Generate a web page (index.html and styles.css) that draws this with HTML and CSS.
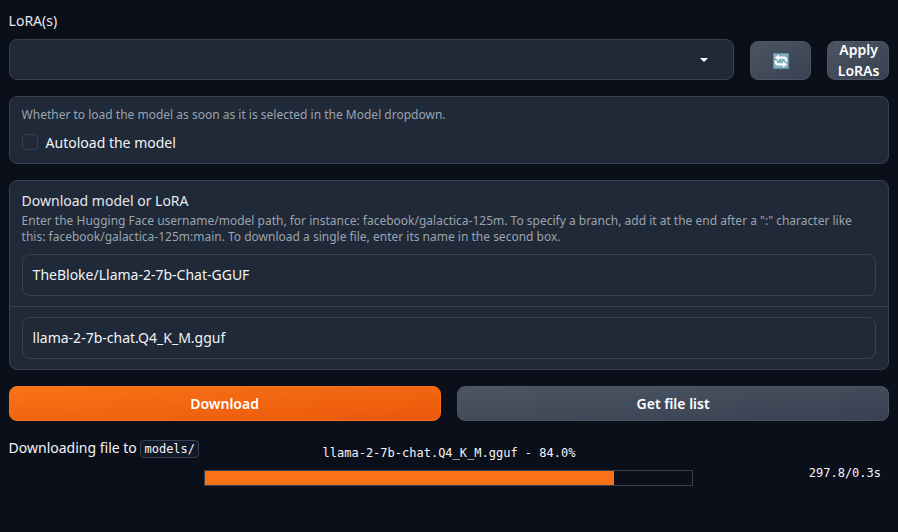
FILE: index.html
```html
<!DOCTYPE html>
<html lang="en">
<head>
<meta charset="utf-8">
<title>Model</title>
<link rel="stylesheet" href="styles.css">
</head>
<body>
<main class="page">
  <div class="label">LoRA(s)</div>
  <div class="lora-row">
    <div class="select">
      <svg class="caret" width="18" height="18" viewBox="0 0 18 18"><path d="M5 7l4 4 4-4z" fill="#fff"/></svg>
    </div>
    <button class="btn secondary small refresh" aria-label="Refresh">
      <svg width="16" height="16" viewBox="0 0 16 16">
        <rect x=".25" y=".25" width="15.5" height="15.5" rx=".8" fill="#82aebf" stroke="#568b9e" stroke-width=".7"/>
        <path d="M13.300 8.600V7.200Q13.300 4.600 10.700 4.600H5M2.700 7.400v1.400Q2.700 11.400 5.300 11.400H11" fill="none" stroke="#fff" stroke-width="2.100"/>
        <path d="M6 1.500v6.200L1.800 4.600zM10 8.300v6.200l4.200-3.100z" fill="#fff"/>
      </svg>
    </button>
    <button class="btn secondary small apply">Apply LoRAs</button>
  </div>
  <section class="card autoload">
    <div class="info">Whether to load the model as soon as it is selected in the Model dropdown.</div>
    <label class="check"><span class="box"></span><span>Autoload the model</span></label>
  </section>
  <section class="card">
    <div class="field first">
      <div class="title">Download model or LoRA</div>
      <div class="info">Enter the Hugging Face username/model path, for instance: facebook/galactica-125m. To specify a branch, add it at the end after a ":" character like this: facebook/galactica-125m:main. To download a single file, enter its name in the second box.</div>
      <div class="input">TheBloke/Llama-2-7b-Chat-GGUF</div>
    </div>
    <div class="field second">
      <div class="input">llama-2-7b-chat.Q4_K_M.gguf</div>
    </div>
  </section>
  <div class="actions">
    <button class="btn primary">Download</button>
    <button class="btn secondary">Get file list</button>
  </div>
  <div class="status">
    <div class="message">Downloading file to <code>models/</code></div>
    <div class="progress">
      <div class="progress-text">llama-2-7b-chat.Q4_K_M.gguf - 84.0%</div>
      <div class="track"><div class="bar" style="width:84%"></div></div>
    </div>
    <div class="timer">297.8/0.3s</div>
  </div>
</main>
</body>
</html>
```

FILE: styles.css
```css
* { box-sizing: border-box; }
body {
  margin: 0;
  background: #0b0f19;
  color: #f3f4f6;
  font: 14px/20px "Noto Sans", sans-serif;
}
.page { padding: 11px 9.4px 0 8.6px; }
.label { height: 20px; margin-bottom: 8px; color: #e5e7eb; }
.lora-row { display: flex; align-items: flex-end; gap: 16px; }
.select {
  flex: 1;
  display: flex;
  align-items: center;
  justify-content: flex-end;
  height: 41px;
  padding-right: 20px;
  background: #1f2937;
  border: 1px solid #374151;
  border-radius: 8px;
}
.caret { display: block; }
.btn {
  display: flex;
  align-items: center;
  justify-content: center;
  padding: 0;
  border: 1px solid #4b5563;
  border-radius: 8px;
  color: #fff;
  font: 600 14px/21px "Noto Sans", sans-serif;
}
.secondary { background: linear-gradient(to bottom right, #4b5563, #374151); }
.primary { border-color: #f97316; background: linear-gradient(to bottom right, #f97316, #ea580c); }
.small { width: 61px; height: 39px; }
.refresh { padding-left: 1px; }
.apply { width: 62px; padding: 0 0 2px 2px; }
.card {
  margin-top: 16px;
  background: #1f2937;
  border: 1px solid #374151;
  border-radius: 8px;
}
.autoload { height: 68px; padding: 10px 12px 0; }
.info { color: #9ca3af; font-size: 12px; line-height: 16px; }
.check { display: flex; gap: 8px; margin-top: 9px; }
.box { width: 16px; height: 16px; margin-top: 2px; border: 1px solid #374151; border-radius: 4px; }
.check span:last-child { line-height: 22px; }
.field { padding: 10px 12px; }
.second { border-top: 1px solid #374151; }
.title { color: #e5e7eb; margin-bottom: 2px; }
.input {
  height: 42px;
  padding: 0 10px;
  border: 1px solid #374151;
  border-radius: 8px;
  line-height: 40px;
}
.info + .input { margin-top: 9px; }
.actions { display: grid; grid-template-columns: 1fr 1fr; gap: 16px; margin-top: 16px; }
.actions .btn { height: 35px; }
.actions .secondary { padding-left: 1px; }
.status { display: grid; grid-template-columns: 195.4px 489px 1fr; margin-top: 16px; }
.message { white-space: nowrap; padding-top: 1px; }
code {
  padding: 1px 3px;
  background: #111827;
  border: 1px solid #374151;
  border-radius: 4px;
  font: 12px "DejaVu Sans Mono", monospace;
}
.progress, .timer { font: 12px/18px "DejaVu Sans Mono", monospace; }
.progress-text { padding: 7px 0 0 1px; text-align: center; }
.track { height: 16px; margin-top: 8px; border: 1px solid #374151; }
.bar { height: 100%; background: #f97316; }
.timer { padding: 27px 7.6px 0 0; text-align: right; }
```
